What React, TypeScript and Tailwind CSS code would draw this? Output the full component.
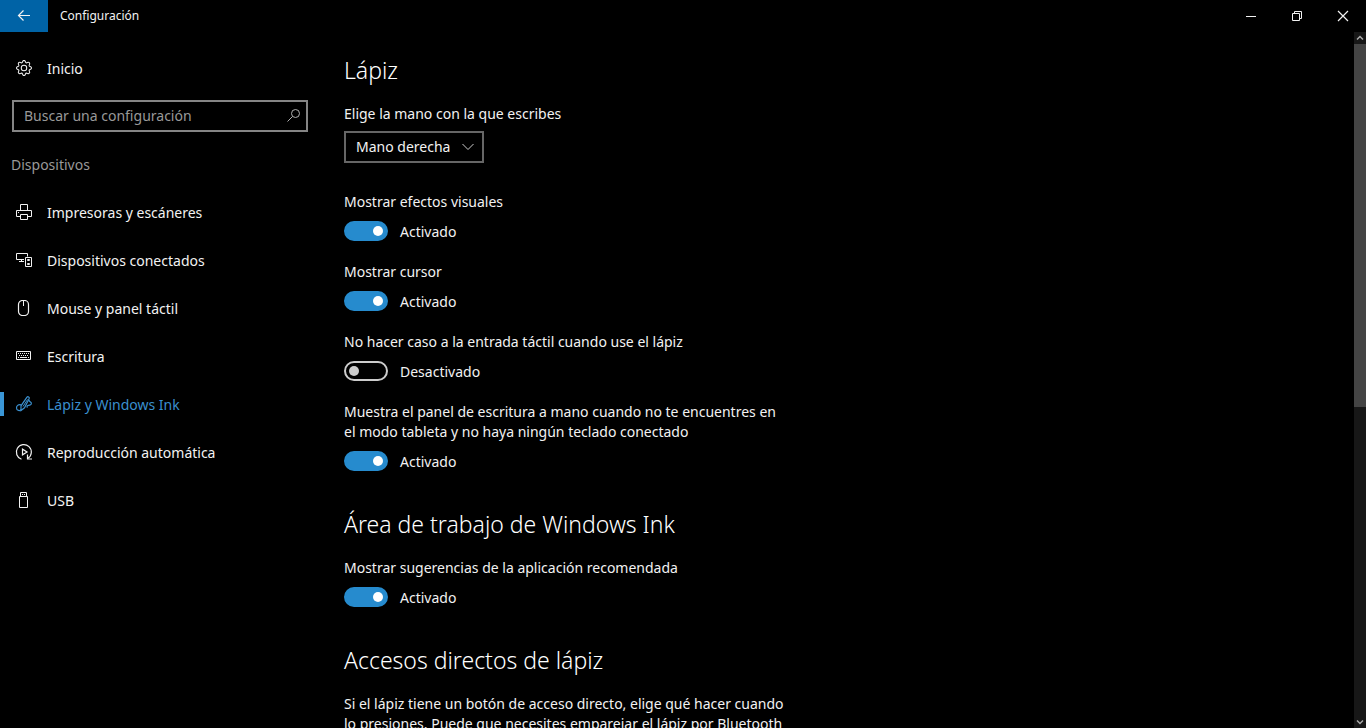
import { useState, type ReactNode } from 'react';
import { BsGear } from 'react-icons/bs';

function Glyph({ children, className = '' }: { children: ReactNode; className?: string }) {
  return (
    <svg
      viewBox="0 0 16 16"
      fill="none"
      stroke="currentColor"
      strokeWidth="1"
      aria-hidden="true"
      className={`size-4 shrink-0 ${className}`}
    >
      {children}
    </svg>
  );
}

const PrinterIcon = () => (
  <Glyph>
    <path d="M4.5 6.5v-6h7v6M4.5 12.5h-4v-6h15v6h-4" />
    <path d="M4.5 10.5h7v5h-7zM2 8.5h1" />
  </Glyph>
);

const DevicesIcon = () => (
  <Glyph>
    <path d="M8 7.5H.5v-6h11v3M3 9.5h5M5.5 7.5v2" />
    <path d="M9.5 5.5h6v9h-6z" />
    <path d="M11.5 7.5h2v1h-2zM11.5 11.5h2v1h-2z" />
  </Glyph>
);

const MouseIcon = () => (
  <Glyph>
    <rect x="2.5" y="0.5" width="10" height="15" rx="4" strokeWidth="1.2" />
    <path d="M7.5 1v5" />
  </Glyph>
);

const KeyboardIcon = () => (
  <Glyph>
    <path d="M.5 3.5h14v8H.5z" />
    <path d="M2 5.5h11M3 7.5h10" strokeDasharray="1 1" />
    <path d="M2 9.5h1M4 9.5h7M12 9.5h1" />
  </Glyph>
);

const PenIcon = () => (
  <Glyph className="overflow-visible">
    <path d="M5 8.8C2 8.3.5 9.8.5 12c0 2.600 3.600 3.500 4.800 1.200" strokeWidth="1.200" />
    <path d="M5 14.5V9.800L10.800 1.300c1-1.300 3.100-.1 2.300 1.400L8.500 11.800z" strokeWidth="1.200" />
    <path d="M7 10.500l4.500-7" />
    <path d="M13 4c-.3 1.500 1.800 1.700 2.300 3 .5 1.800-1.500 2.200-3 2.400-1.400.3-1.800 1.600-.8 2.200" strokeWidth="1.200" />
  </Glyph>
);

const AutoplayIcon = () => (
  <Glyph className="overflow-visible">
    <path d="M5.500 15.200A7.500 7.500 0 1 1 12 14.300" strokeWidth="1.200" />
    <path d="M11.500 10.500v4.500h4.500" strokeWidth="1.200" />
    <path d="M6.500 5.200v5.600L11 8z" strokeWidth="1.200" />
  </Glyph>
);

const UsbIcon = () => (
  <Glyph>
    <path d="M3.5 4.5h8v11h-8zM4.5 4.500v-4h6v4" />
    <path d="M6 2.500h1M8 2.500h1" />
  </Glyph>
);

const navItems = [
  { label: 'Impresoras y escáneres', icon: <PrinterIcon /> },
  { label: 'Dispositivos conectados', icon: <DevicesIcon /> },
  { label: 'Mouse y panel táctil', icon: <MouseIcon /> },
  { label: 'Escritura', icon: <KeyboardIcon /> },
  { label: 'Lápiz y Windows Ink', icon: <PenIcon />, active: true },
  { label: 'Reproducción automática', icon: <AutoplayIcon /> },
  { label: 'USB', icon: <UsbIcon /> },
];

function TitleBar() {
  return (
    <header className="flex h-8 shrink-0 items-center">
      <button type="button" aria-label="Atrás" className="flex h-8 w-12 items-center justify-center bg-[#0063a6]">
        <Glyph>
          <path d="M14 7.5H2.500M7.500 2.500l-5 5 5 5" strokeWidth="1.200" />
        </Glyph>
      </button>
      <h1 className="flex-1 pl-3 text-xs">Configuración</h1>
      <button type="button" aria-label="Minimizar" className="flex h-8 w-[46px] items-center justify-center">
        <Glyph>
          <path d="M3 8.5h10" />
        </Glyph>
      </button>
      <button type="button" aria-label="Restaurar" className="flex h-8 w-[46px] items-center justify-center">
        <Glyph>
          <path d="M3.5 5.5h7v7h-7zM5.5 5.500v-2h7v7h-2" />
        </Glyph>
      </button>
      <button type="button" aria-label="Cerrar" className="flex h-8 w-[46px] items-center justify-center">
        <Glyph>
          <path d="M3 3l10 10M13 3L3 13" strokeWidth="1.200" />
        </Glyph>
      </button>
    </header>
  );
}

function Sidebar() {
  return (
    <aside className="w-80 shrink-0 pt-3">
      <a href="#inicio" className="flex h-12 items-center pl-4">
        <BsGear className="size-4" aria-hidden="true" />
        <span className="pt-px pl-[15px]">Inicio</span>
      </a>
      <div className="relative mx-3 mt-2">
        <input
          type="search"
          aria-label="Buscar una configuración"
          placeholder="Buscar una configuración"
          className="h-8 w-full border-2 border-[#858585] bg-black pr-8 pb-0.5 pl-[10px] outline-none placeholder:text-[#999]"
        />
        <Glyph className="absolute top-2 right-1.5 text-[#b0b0b0]">
          <circle cx="9.5" cy="5.5" r="4" />
          <path d="M6.5 8.500L1.500 13.500" />
        </Glyph>
      </div>
      <h2 className="mt-[23px] mb-[13px] pl-[11px] text-[#999]">Dispositivos</h2>
      <nav>
        {navItems.map((item) => (
          <a
            key={item.label}
            href="#"
            aria-current={item.active ? 'page' : undefined}
            className={`flex h-12 items-center ${item.active ? 'text-[#3a8fce]' : ''}`}
          >
            <span className={`mr-3 h-6 w-1 ${item.active ? 'bg-[#3a96d6]' : ''}`} />
            {item.icon}
            <span className="pt-0.5 pl-[15px]">{item.label}</span>
          </a>
        ))}
      </nav>
    </aside>
  );
}

function Heading({ children }: { children: ReactNode }) {
  return <h2 className="text-[23px] leading-8 font-light text-white">{children}</h2>;
}

function Toggle({ id, label, initial = true }: { id: string; label: string; initial?: boolean }) {
  const [on, setOn] = useState(initial);

  return (
    <div className="max-w-[444px]">
      <label htmlFor={id} className="block">
        {label}
      </label>
      <div className="mt-[9px] flex h-5 items-center gap-3">
        <input
          id={id}
          type="checkbox"
          role="switch"
          checked={on}
          onChange={() => setOn(!on)}
          className="flex h-5 w-11 appearance-none items-center rounded-full border-2 border-[#ccc] px-[3px] before:size-[10px] before:rounded-full before:bg-[#ccc] checked:justify-end checked:border-[#268bce] checked:bg-[#268bce] checked:before:bg-white"
        />
        <span className="pt-0.5">{on ? 'Activado' : 'Desactivado'}</span>
      </div>
    </div>
  );
}

function PenSettings() {
  return (
    <main className="min-w-0 flex-1 overflow-hidden pt-[22px] pr-6 pl-6">
      <section>
        <Heading>Lápiz</Heading>
        <label htmlFor="mano" className="mt-[18px] block">
          Elige la mano con la que escribes
        </label>
        <div className="relative mt-[7px] w-[140px]">
          <select id="mano" className="h-8 w-full appearance-none border-2 border-[#666] bg-black pl-[10px] outline-none">
            <option>Mano derecha</option>
            <option>Mano izquierda</option>
          </select>
          <Glyph className="pointer-events-none absolute top-2 right-2 text-[#ccc]">
            <path d="M2.500 5l5.500 5.500L13.500 5" />
          </Glyph>
        </div>
        <div className="mt-[29px] space-y-[21px]">
          <Toggle id="efectos" label="Mostrar efectos visuales" />
          <Toggle id="cursor" label="Mostrar cursor" />
          <Toggle id="tactil" label="No hacer caso a la entrada táctil cuando use el lápiz" initial={false} />
          <Toggle
            id="panel"
            label="Muestra el panel de escritura a mano cuando no te encuentres en el modo tableta y no haya ningún teclado conectado"
          />
        </div>
      </section>

      <section className="mt-[37px] space-y-[18px]">
        <Heading>Área de trabajo de Windows Ink</Heading>
        <Toggle id="sugerencias" label="Mostrar sugerencias de la aplicación recomendada" />
      </section>

      <section className="mt-[37px] space-y-[18px]">
        <Heading>Accesos directos de lápiz</Heading>
        <p className="max-w-[444px]">
          Si el lápiz tiene un botón de acceso directo, elige qué hacer cuando lo presiones. Puede que necesites
          emparejar el lápiz por Bluetooth
        </p>
      </section>
    </main>
  );
}

function ScrollBar() {
  return (
    <div className="flex w-3 shrink-0 flex-col bg-[#171717] text-[#aaa]">
      <button type="button" aria-label="Desplazar hacia arriba" className="flex h-3 items-center justify-center">
        <svg viewBox="0 0 8 8" className="size-2" fill="none" stroke="currentColor" strokeWidth="1.500" aria-hidden="true">
          <path d="M1 5.500l3-3 3 3" />
        </svg>
      </button>
      <div className="flex-1">
        <div className="h-[54%] bg-[#444]" />
      </div>
      <button type="button" aria-label="Desplazar hacia abajo" className="flex h-3 items-center justify-center">
        <svg viewBox="0 0 8 8" className="size-2" fill="none" stroke="currentColor" strokeWidth="1.500" aria-hidden="true">
          <path d="M1 2.500l3 3 3-3" />
        </svg>
      </button>
    </div>
  );
}

export default function App() {
  return (
    <div className="flex h-screen flex-col overflow-hidden bg-black font-['Segoe_UI','Noto_Sans',sans-serif] text-sm leading-5 text-[#f2f2f2]">
      <TitleBar />
      <div className="flex min-h-0 flex-1">
        <Sidebar />
        <PenSettings />
        <ScrollBar />
      </div>
    </div>
  );
}
